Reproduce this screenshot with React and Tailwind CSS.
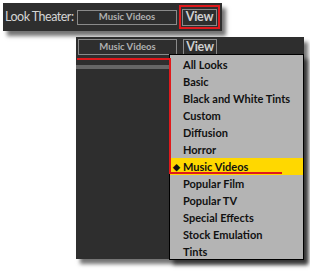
import React from 'react'

const LOOKS = [
  'All Looks',
  'Basic',
  'Black and White Tints',
  'Custom',
  'Diffusion',
  'Horror',
  'Music Videos',
  'Popular Film',
  'Popular TV',
  'Special Effects',
  'Stock Emulation',
  'Tints',
]

const SELECTED = 'Music Videos'
const font = { fontFamily: 'Lato, "Open Sans", sans-serif' }

export default function App() {
  return (
    <div className="w-[310px] h-[271px] bg-white overflow-hidden pt-[3px]" style={font}>
      {/* Top toolbar */}
      <div className="ml-[3px] w-[219px] h-[28px] bg-[#2e2e2e] flex items-center shadow-[4px_5px_4px_rgba(0,0,0,0.55)]">
        <span className="ml-[2px] w-[70px] shrink-0 whitespace-nowrap text-[12.5px] tracking-[-0.5px] text-[#d4d4d4] leading-none">Look Theater:</span>
        <div className="ml-[2px] w-[100px] h-[15px] shrink-0 border border-[#8a8a8a] flex items-center justify-center text-[9.5px] font-bold text-[#b0b0b0] leading-none">
          {SELECTED}
        </div>
        <div className="ml-[2px] w-[41px] h-[24px] shrink-0 border-2 border-[#e0191c] flex items-center justify-center">
          <div className="w-[35px] h-[17px] border border-[#8a8a8a] flex items-center justify-center text-[12.5px] tracking-[-0.3px] text-[#cfcfcf] leading-none font-bold">
            View
          </div>
        </div>
      </div>

      {/* Expanded panel */}
      <div className="relative ml-[76px] mt-[6px] w-[228px] h-[222px] bg-[#2e2e2e] shadow-[4px_5px_4px_rgba(0,0,0,0.55)]">
        <div className="flex pt-[2px] pl-[2px] gap-[6px]">
          <div className="w-[99px] h-[16px] border border-[#8a8a8a] flex items-center justify-center text-[9.5px] font-bold text-[#b0b0b0] leading-none">
            {SELECTED}
          </div>
          <div className="w-[34px] h-[16px] border border-[#8a8a8a] flex items-center justify-center text-[12.5px] tracking-[-0.3px] font-bold text-[#cfcfcf] leading-none">
            View
          </div>
        </div>
        <div className="mt-[10px] w-[94px] h-[4px] bg-[#666666]" />

        {/* Dropdown menu */}
        <div className="absolute left-[93px] top-[17px] right-0 h-[206px] bg-[#b4b4b4] border border-black shadow-[4px_5px_4px_rgba(0,0,0,0.55)] pt-[1px]">
          {LOOKS.map((name) => {
            const active = name === SELECTED
            return (
              <div
                key={name}
                className={`h-[17px] flex items-center pl-[13px] text-[11px] font-bold text-[#111] leading-none relative ${active ? 'bg-[#ffd800]' : ''}`}
              >
                {active && <span className="absolute left-[3px] text-[9px]">◆</span>}
                {name}
              </div>
            )
          })}
        </div>

        {/* Red annotation outline */}
        <div className="absolute left-[1px] top-[21px] w-[94px] h-[2px] bg-[#e0191c]" />
        <div className="absolute left-[93px] top-[21px] w-[2px] h-[116px] bg-[#e0191c]" />
        <div className="absolute left-[93px] top-[135px] w-[113px] h-[2px] bg-[#e0191c]" />
      </div>
    </div>
  )
}
